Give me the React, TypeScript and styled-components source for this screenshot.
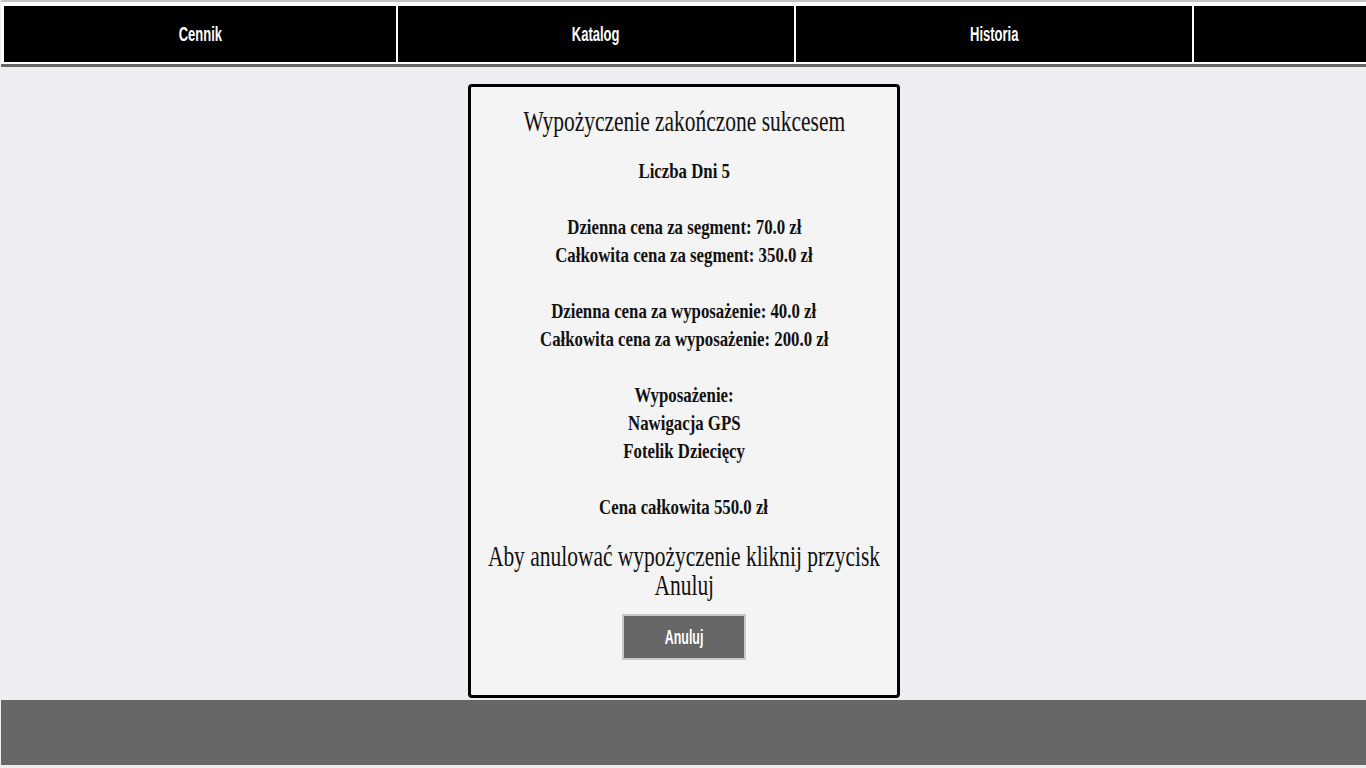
import React from 'react';
import styled, { createGlobalStyle } from 'styled-components';

const GlobalStyle = createGlobalStyle`
  html, body {
    margin: 0;
    padding: 0;
    background: #edeef2;
  }
  body {
    font-family: "Liberation Serif", serif;
    overflow: hidden;
  }
`;

const Page = styled.div`
  width: 1366px;
  height: 768px;
  display: flex;
  flex-direction: column;
`;

const NavBar = styled.nav`
  border-top: 2px solid #c4c4c4;
  border-bottom: 3px solid #666666;
  background: #ffffff;
  padding: 4px 0 2px 3px;
  margin-left: 1px;
  display: flex;
  gap: 2px;
  overflow: hidden;
`;

const NavCell = styled.a<{ $first?: boolean }>`
  flex: 0 0 ${(p) => (p.$first ? 392 : 396)}px;
  height: 56px;
  background: #000000;
  color: #ffffff;
  display: flex;
  align-items: center;
  justify-content: center;
  font-family: "Liberation Sans", Arial, sans-serif;
  font-weight: bold;
  font-size: 20px;
  text-decoration: none;
  cursor: pointer;
`;

const Narrow = styled.span<{ $scale?: number }>`
  display: inline-block;
  white-space: nowrap;
  transform: scaleX(${(p) => p.$scale ?? 0.74});
  transform-origin: center;
`;

const Main = styled.main`
  flex: 1;
  display: flex;
  justify-content: center;
  padding: 17px 0 0 2px;
`;

const Card = styled.section`
  box-sizing: border-box;
  width: 432px;
  height: 614px;
  border: 3px solid #000000;
  border-radius: 4px;
  background: #f4f4f4;
  display: flex;
  flex-direction: column;
  align-items: center;
  padding-top: 18px;
  color: #111111;
`;

const Title = styled.h2`
  margin: 0 0 20px;
  font-size: 29px;
  font-weight: normal;
  line-height: 32px;
  display: flex;
  flex-direction: column;
  align-items: center;
`;

const Details = styled.div`
  font-size: 21px;
  font-weight: bold;
  line-height: 28px;
  display: flex;
  flex-direction: column;
  align-items: center;
`;

const Line = styled.div`
  height: 28px;
`;

const Note = styled.p`
  margin: 21px 0 14px;
  font-size: 29px;
  line-height: 29px;
  display: flex;
  flex-direction: column;
  align-items: center;
`;

const CancelButton = styled.button`
  width: 124px;
  height: 46px;
  background: #666666;
  border: 2px solid #c8c8c8;
  color: #ffffff;
  font-family: "Liberation Sans", Arial, sans-serif;
  font-weight: bold;
  font-size: 20px;
  cursor: pointer;
  display: flex;
  align-items: center;
  justify-content: center;
  padding: 0;
`;

const Footer = styled.footer`
  height: 65px;
  margin: 2px 0 3px 1px;
  background: #676767;
`;

const navItems = ['Cennik', 'Katalog', 'Historia', ''];

const detailLines = [
  'Liczba Dni 5',
  '',
  'Dzienna cena za segment: 70.0 zł',
  'Całkowita cena za segment: 350.0 zł',
  '',
  'Dzienna cena za wyposażenie: 40.0 zł',
  'Całkowita cena za wyposażenie: 200.0 zł',
  '',
  'Wyposażenie:',
  'Nawigacja GPS',
  'Fotelik Dziecięcy',
  '',
  'Cena całkowita 550.0 zł',
];

export default function App() {
  return (
    <Page>
      <GlobalStyle />
      <NavBar>
        {navItems.map((item, i) => (
          <NavCell key={i} $first={i === 0}>
            <Narrow $scale={0.65}>{item}</Narrow>
          </NavCell>
        ))}
      </NavBar>
      <Main>
        <Card>
          <Title>
            <Narrow>Wypożyczenie zakończone sukcesem</Narrow>
          </Title>
          <Details>
            {detailLines.map((text, i) => (
              <Line key={i}>
                <Narrow $scale={0.8}>{text}</Narrow>
              </Line>
            ))}
          </Details>
          <Note>
            <Narrow>Aby anulować wypożyczenie kliknij przycisk</Narrow>
            <Narrow>Anuluj</Narrow>
          </Note>
          <CancelButton>
            <Narrow $scale={0.62}>Anuluj</Narrow>
          </CancelButton>
        </Card>
      </Main>
      <Footer />
    </Page>
  );
}
